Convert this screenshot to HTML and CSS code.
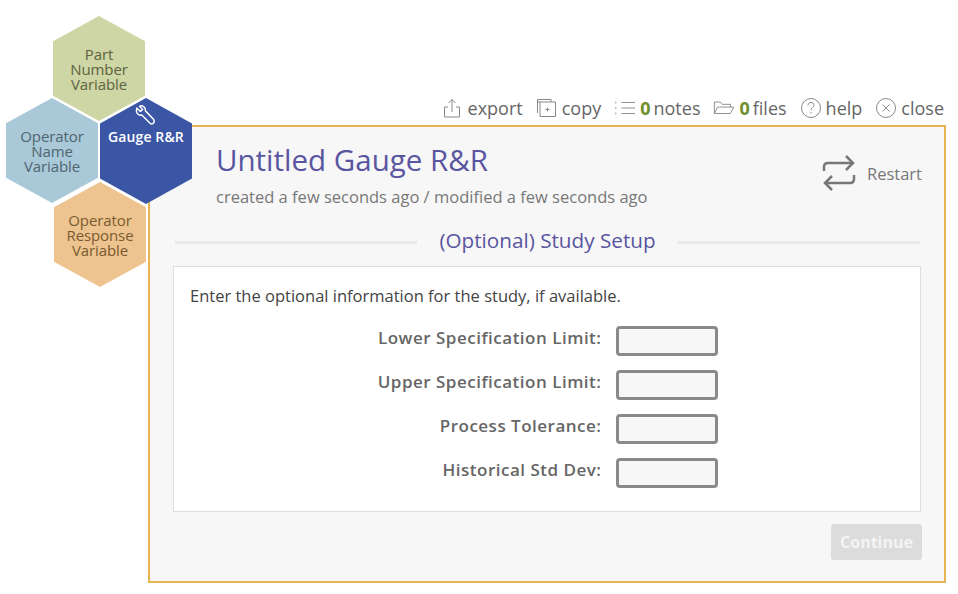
FILE: index.html
```html
<!DOCTYPE html>
<html lang="en">
<head>
    <meta charset="UTF-8">
    <title>Untitled Gauge R&amp;R</title>
    <link rel="stylesheet" href="styles.css">
</head>
<body>
    <div class="hexes">
        <div class="hex hex-part">Part<br>Number<br>Variable</div>
        <div class="hex hex-name">Operator<br>Name<br>Variable</div>
        <div class="hex hex-response">Operator<br>Response<br>Variable</div>
        <div class="hex hex-gauge">
            <svg class="wrench" viewBox="0 0 24 24" width="22" height="22" fill="none" stroke="#fff" stroke-width="1.6" stroke-linejoin="round">
                <path d="M3 4.5 L7 8 L9.5 6 L6 2.5 C9 1 13 3 12.5 7.5 L21.5 17 C22.5 18.5 22 20 21 21 C20 22 18.5 22 17.5 21 L8.5 12 C4 13 1.5 9 3 4.5 Z"/>
            </svg>
            <span>Gauge R&amp;R</span>
        </div>
    </div>

    <div class="toolbar">
        <span class="tool tool-wide">
            <svg viewBox="0 0 20 20" width="20" height="20" fill="none" stroke="#888" stroke-width="1">
                <path d="M6 9H2.5V19H17.5V9H14M10 14V1.5M6.5 5L10 1.5L13.500 5"/>
            </svg>
            export
        </span>
        <span class="tool tool-wide">
            <svg viewBox="0 0 20 20" width="20" height="20" fill="none" stroke="#888" stroke-width="1">
                <path d="M1.500 15V1.500H15M1.500 4H15V1.500M4 4V18.500H19.500V4H15M9.500 11.500H13.500M11.500 9.500V13.500"/>
            </svg>
            copy
        </span>
        <span class="tool">
            <svg viewBox="0 0 24 20" width="22" height="20" fill="none" stroke="#888" stroke-width="1">
                <path d="M8 4H23M8 10H23M8 16H23M2 3V5M2 9V11M2 15V17"/>
            </svg>
            <span><b class="count">0</b>notes</span>
        </span>
        <span class="tool">
            <svg viewBox="0 0 24 20" width="22" height="20" fill="none" stroke="#888" stroke-width="1">
                <path d="M1.500 16V3.500H8L10 6H19V9M1.500 16L5 9H22.500L19 16Z"/>
            </svg>
            <span><b class="count">0</b>files</span>
        </span>
        <span class="tool">
            <svg viewBox="0 0 22 22" width="22" height="22" fill="none" stroke="#888" stroke-width="1">
                <circle cx="11" cy="11" r="9.500"/>
                <path d="M8 8.500C8 4.500 14 4.500 14 8.500C14 10.500 11 10.500 11 13M11 15V16.500"/>
            </svg>
            help
        </span>
        <span class="tool">
            <svg viewBox="0 0 22 22" width="22" height="22" fill="none" stroke="#888" stroke-width="1">
                <circle cx="11" cy="11" r="9.500"/>
                <path d="M7.500 7.500L14.500 14.500M14.500 7.500L7.500 14.500"/>
            </svg>
            close
        </span>
    </div>

    <div class="panel">
        <div class="panel-head">
            <div>
                <h1>Untitled Gauge R&amp;R</h1>
                <p class="dates">created a few seconds ago / modified a few seconds ago</p>
            </div>
            <div class="restart">
                <svg viewBox="0 0 34 36" width="34" height="36" fill="none" stroke="#777" stroke-width="2.500">
                    <path d="M2 16V12C2 9 4 8 6 8H31M24 1L31 8L24 15M32 20V24C32 27 30 28 28 28H3M10 21L3 28L10 35"/>
                </svg>
                <span>Restart</span>
            </div>
        </div>

        <div class="section-title"><span>(Optional) Study Setup</span></div>

        <div class="form-box">
            <p class="intro">Enter the optional information for the study, if available.</p>
            <div class="field"><label>Lower Specification Limit:</label><input type="text"></div>
            <div class="field"><label>Upper Specification Limit:</label><input type="text"></div>
            <div class="field"><label>Process Tolerance:</label><input type="text"></div>
            <div class="field"><label>Historical Std Dev:</label><input type="text"></div>
        </div>

        <div class="actions">
            <button class="btn-continue" disabled>Continue</button>
        </div>
    </div>
</body>
</html>
```

FILE: styles.css
```css
body {
    margin: 0;
    font-family: "Open Sans", sans-serif;
    background: white;
    color: #555;
}
.hexes {
    position: absolute;
    top: 0;
    left: 0;
    z-index: 2;
}
.hex {
    position: absolute;
    width: 92px;
    height: 105px;
    box-sizing: border-box;
    padding-top: 31px;
    clip-path: polygon(50% 0, 100% 24%, 100% 76%, 50% 100%, 0 76%, 0 24%);
    text-align: center;
    font-size: 15px;
    line-height: 15px;
    letter-spacing: -0.1px;
}
.hex-part {
    left: 53px;
    top: 16px;
    background: #ced6a5;
    color: #5d6340;
}
.hex-name {
    left: 6px;
    top: 98px;
    background: #a9c8d8;
    color: #4f6570;
}
.hex-response {
    left: 54px;
    top: 182px;
    background: #edc48f;
    color: #7a5a30;
}
.hex-gauge {
    left: 100px;
    top: 98px;
    height: 106px;
    padding-top: 6px;
    background: #3a56a5;
    color: white;
    font-size: 14px;
    font-weight: 600;
    letter-spacing: 0.1px;
}
.hex-gauge span {
    display: block;
    margin-top: 3px;
    white-space: nowrap;
}
.wrench {
    display: block;
    margin: 0 auto 0 34px;
}
.toolbar {
    display: flex;
    justify-content: flex-end;
    align-items: center;
    gap: 13px;
    height: 32px;
    padding: 92px 14px 1px 0;
    font-size: 18px;
    color: #666;
}
.tool {
    display: flex;
    align-items: center;
    gap: 4px;
}
.tool-wide {
    gap: 6px;
}
.count {
    margin-right: 3px;
    color: #6f8f2f;
    font-weight: 700;
}
.panel {
    box-sizing: border-box;
    width: 798px;
    height: 458px;
    margin-left: 148px;
    border: 2px solid #e6b450;
    background: #f7f7f7;
    padding: 0 23px 0 23px;
}
.panel-head {
    display: flex;
    justify-content: space-between;
    padding: 13px 0 0 43px;
}
h1 {
    margin: 0;
    font-size: 29.500px;
    line-height: 40px;
    font-weight: 400;
    color: #5a55a0;
}
.dates {
    margin: 5px 0 0;
    font-size: 16.500px;
    line-height: 24px;
    color: #777;
}
.restart {
    display: flex;
    align-items: center;
    gap: 11px;
    height: 40px;
    margin: 13px -1px 0 0;
    font-size: 16.500px;
    color: #777;
}
.section-title {
    display: flex;
    align-items: center;
    gap: 22px;
    margin-top: 17px;
    padding: 0 1px 0 2px;
    font-size: 20.700px;
    line-height: 28px;
    color: #5a55a0;
}
.section-title span {
    white-space: nowrap;
}
.section-title::before,
.section-title::after {
    content: "";
    flex: 1;
    height: 3px;
    margin-top: 4px;
    background: #e8e8e8;
}
.form-box {
    height: 246px;
    box-sizing: border-box;
    margin-top: 12px;
    padding: 17px 16px;
    background: white;
    border: 1px solid #ddd;
}
.intro {
    margin: 0 0 18px;
    font-size: 16.500px;
    line-height: 24px;
    color: #444;
}
.field {
    display: flex;
    justify-content: center;
    align-items: center;
    height: 30px;
    margin-bottom: 14px;
    padding-right: 186px;
}
.field label {
    width: 411px;
    margin-right: 14px;
    margin-bottom: 7px;
    text-align: right;
    font-size: 17px;
    font-weight: 600;
    letter-spacing: 0.5px;
    color: #666;
}
.field input {
    box-sizing: border-box;
    width: 102px;
    height: 30px;
    border: 3px solid #8a8a8a;
    border-radius: 4px;
    background: #f7f7f7;
}
.actions {
    display: flex;
    justify-content: flex-end;
    margin: 12px -1px 0 0;
}
.btn-continue {
    width: 91px;
    height: 36px;
    border: none;
    border-radius: 3px;
    background: #dcdcdc;
    color: #f4f4f4;
    font-family: "Open Sans", sans-serif;
    font-size: 16px;
    font-weight: 700;
}
```
